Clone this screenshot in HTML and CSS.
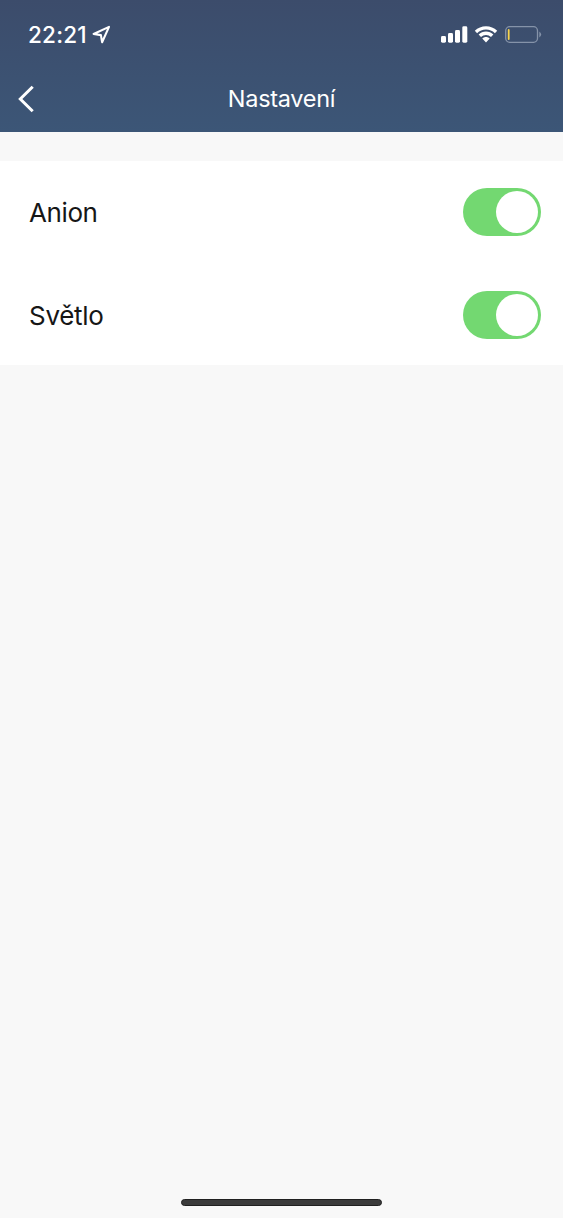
FILE: index.html
```html
<!DOCTYPE html>
<html lang="cs">
<head>
<meta charset="utf-8">
<title>Nastavení</title>
<link rel="stylesheet" href="styles.css">
</head>
<body>
<div class="screen">
  <header class="header">
    <div class="status">
      <div class="status-left">
        <span class="time">22:21</span>
        <svg class="location" width="19" height="19" viewBox="0 0 19 19"><path d="M1.600 9 17 1.900 10.100 17.200 8.900 10.100Z" fill="none" stroke="#fff" stroke-width="2.100" stroke-linejoin="round"/></svg>
      </div>
      <div class="status-right">
        <svg class="signal" width="27" height="17" viewBox="0 0 27 17" fill="#fff"><rect x="0" y="10" width="5" height="6.700" rx="1.400"/><rect x="7" y="7" width="5" height="9.700" rx="1.400"/><rect x="14" y="4" width="5" height="12.700" rx="1.400"/><rect x="21.300" y="0.300" width="5" height="16.400" rx="1.400"/></svg>
        <svg class="wifi" width="24" height="17" viewBox="0 0 24 17" fill="#fff"><path d="M12 0.300C16.200 0.300 20.200 1.900 23.200 4.800L20.900 7.200A12.800 12.800 0 0 0 3.100 7.200L0.800 4.800C3.800 1.900 7.800 0.300 12 0.300ZM12 5.600C14.800 5.600 17.400 6.700 19.400 8.600L17 11A7.300 7.300 0 0 0 7 11L4.600 8.600C6.600 6.700 9.200 5.600 12 5.600ZM12 11C13.400 11 14.600 11.500 15.700 12.500L12 16.400 8.300 12.500C9.400 11.500 10.600 11 12 11Z"/></svg>
        <svg class="battery" width="37" height="17" viewBox="0 0 37 17"><rect x="0.700" y="0.700" width="31.800" height="15.600" rx="4" fill="none" stroke="#8593a9" stroke-width="1.300"/><rect x="2.800" y="3" width="1.800" height="11" rx="0.900" fill="#f7d34b"/><path d="M34.300 5.500Q38 8.500 34.300 11.500Z" fill="#8593a9"/></svg>
      </div>
    </div>
    <nav class="nav">
      <svg class="back" width="18" height="28" viewBox="0 0 18 28"><path d="M15.700 1.700 3.300 14 15.700 26.300" fill="none" stroke="#fff" stroke-width="3"/></svg>
      <h1 class="title">Nastavení</h1>
    </nav>
  </header>
  <main class="settings">
    <div class="row"><span class="label anion">Anion</span><span class="toggle"><span class="knob"></span></span></div>
    <div class="row"><span class="label svetlo">Světlo</span><span class="toggle"><span class="knob"></span></span></div>
  </main>
  <div class="home"></div>
</div>
</body>
</html>
```
FILE: styles.css
```css
* { box-sizing: border-box; }
body { margin: 0; font-family: Inter, "Liberation Sans", sans-serif; }
.screen { height: 1218px; background: #f8f8f8; display: flex; flex-direction: column; }
.header { height: 132px; background: linear-gradient(#3c4c6b, #3c5677); color: #fff; }
.status { height: 68px; padding: 1px 21px 0 28px; display: flex; justify-content: space-between; align-items: center; }
.status-left, .status-right { display: flex; align-items: center; }
.time { font-size: 22.5px; font-weight: 500; letter-spacing: 0.2px; }
.location { margin-left: 5px; }
.wifi { margin-left: 6px; }
.battery { margin-left: 7px; }
.nav { height: 62px; display: grid; grid-template-columns: 60px 1fr 60px; align-items: center; }
.back { margin-left: 17px; }
.title { margin: 0; padding-bottom: 2px; font-size: 23.5px; font-weight: 400; letter-spacing: -0.3px; text-align: center; }
.settings { margin-top: 29px; background: #fff; height: 204px; }
.row { height: 102px; padding: 0 22.5px 0 29px; display: flex; align-items: center; justify-content: space-between; }
.row + .row { padding-top: 1px; }
.label { font-size: 26px; font-weight: 400; letter-spacing: -0.4px; color: #161616; }
.svetlo { padding-top: 1px; letter-spacing: -0.3px; }
.toggle { width: 78px; height: 48px; border-radius: 24px; background: #73d871; padding: 3px; display: flex; justify-content: flex-end; }
.knob { width: 42px; height: 42px; border-radius: 50%; background: #fff; }
.home { width: 201px; height: 7px; border-radius: 4px; background: #3b3b3b; border: 1px solid #202020; margin: auto auto 12px; }
```
